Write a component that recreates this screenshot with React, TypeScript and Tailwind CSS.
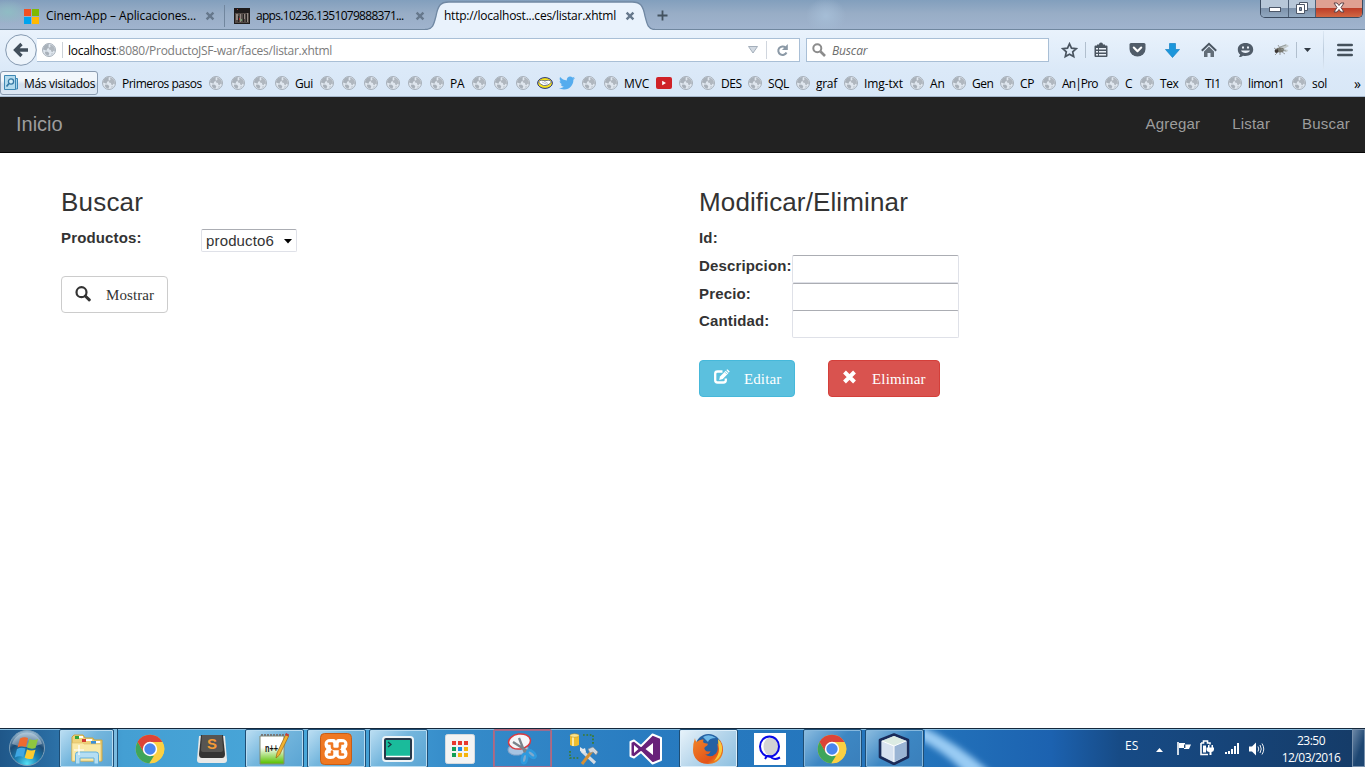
import React from "react";
import { FaTwitter } from "react-icons/fa";

const ui = "font-['Open_Sans','Noto_Sans',sans-serif]";

function Globe() {
  return (
    <svg width="14" height="14" viewBox="0 0 14 14" className="block shrink-0">
      <circle cx="7" cy="7" r="6.5" fill="#dfe6ee" stroke="#a7b0ba" strokeWidth="1" />
      <path d="M1 6.500C1.200 3.500 3.500 1.200 6 1l1.300.8L6.200 3l1 1.300-2 1.500-.8 1.900L2.800 7z" fill="#a9b1ba" />
      <path d="M8 1.800c2 0 4 1.500 4.700 3.400l.2 3-1.500-.4-.8 1.500-1.400-.8-.3-1.600-1.800-.4L6.600 5l1.900-1.200z" fill="#b0b7bf" />
      <path d="m3.400 8.600 2.400.2 1.500 1.400-.9 2.500-2-.7-1.600-2zM9 10.800l2-.6-1.200 1.600z" fill="#a9b1ba" />
    </svg>
  );
}

function Cross() {
  return (
    <svg width="10" height="10" viewBox="0 0 10 10" className="block shrink-0">
      <path d="M1.600 1.600 8.400 8.400M8.400 1.600 1.600 8.400" stroke="#66788c" strokeWidth="2.400" />
    </svg>
  );
}

function Handshake() {
  return (
    <svg width="16" height="12" viewBox="0 0 16 12" className="block">
      <ellipse cx="8" cy="6" rx="7.400" ry="5.400" fill="#f5e11c" stroke="#27347c" />
      <path d="M1.500 4.800 4 3.200l4 .5 4-.5 2.500 1.600L12.500 7l-3 1.500h-3L3.500 7z" fill="#fff" stroke="#27347c" strokeWidth=".6" />
      <path d="m5 5 5 2.500M7 4l4 2.500" stroke="#7b83a8" strokeWidth=".5" />
    </svg>
  );
}

function Youtube() {
  return (
    <svg width="16" height="12" viewBox="0 0 16 12" className="block">
      <rect width="16" height="12" rx="2" fill="#cf2127" />
      <path d="M6.200 3.800v4.400L10 6z" fill="#fff" />
    </svg>
  );
}

type Mark = { w: string; kind?: string; label?: string; t?: string };
const marks: Mark[] = [
  { w: "w-[107px]", label: "Primeros pasos", t: "tracking-[-0.5px]" },
  { w: "w-[22px]" },
  { w: "w-[22px]" },
  { w: "w-[22px]" },
  { w: "w-[45px]", label: "Gui", t: "tracking-[-0.4px]" },
  { w: "w-[22px]" },
  { w: "w-[22px]" },
  { w: "w-[22px]" },
  { w: "w-[22px]" },
  { w: "w-[22px]" },
  { w: "w-[42px]", label: "PA", t: "tracking-[-0.2px]" },
  { w: "w-[22px]" },
  { w: "w-[22px]" },
  { w: "w-[21px]" },
  { w: "w-[22px]", kind: "hand" },
  { w: "w-[23px]", kind: "bird" },
  { w: "w-[22px]" },
  { w: "w-[52px]", label: "MVC", t: "tracking-[-0.1px]" },
  { w: "w-[23px]", kind: "tube" },
  { w: "w-[22px]" },
  { w: "w-[47px]", label: "DES", t: "tracking-[-0.5px]" },
  { w: "w-[48px]", label: "SQL", t: "tracking-[-0.4px]" },
  { w: "w-[48px]", label: "graf", t: "tracking-[-0.3px]" },
  { w: "w-[66px]", label: "Img-txt", t: "tracking-[-0.1px]" },
  { w: "w-[42px]", label: "An", t: "tracking-[-0.2px]" },
  { w: "w-[48px]", label: "Gen", t: "tracking-[-0.5px]" },
  { w: "w-[42px]", label: "CP", t: "tracking-[-0.2px]" },
  { w: "w-[63px]", label: "An|Pro", t: "tracking-[-0.9px]" },
  { w: "w-[35px]", label: "C" },
  { w: "w-[45px]", label: "Tex", t: "tracking-[-0.4px]" },
  { w: "w-[43px]", label: "TI1", t: "tracking-[-0.4px]" },
  { w: "w-[64px]", label: "limon1", t: "tracking-[-0.4px]" },
  { w: "w-[62px]", label: "sol", t: "tracking-[-0.3px]" },
];

function Bookmark({ m }: { m: Mark }) {
  return (
    <div className={`flex shrink-0 items-center gap-[6px] ${m.w}`}>
      {m.kind === "hand" ? <Handshake /> : m.kind === "bird" ? <FaTwitter size={16} color="#55acee" /> : m.kind === "tube" ? <Youtube /> : <Globe />}
      {m.label && <span className={`whitespace-nowrap pt-[2px] ${m.t ?? ""}`}>{m.label}</span>}
    </div>
  );
}

function TabStrip() {
  return (
    <div className="flex h-[30px] shrink-0 items-start bg-[linear-gradient(180deg,#829fbd_0%,#98adc6_45%,#a0b4ce_100%)] text-[12px] text-black shadow-[inset_0_-1px_0_#70879f]">
      <div className="flex h-[29px] w-[224px] items-center bg-[radial-gradient(ellipse_20px_12px_at_8px_12px,#8fbcc4,transparent)] pl-6 pt-[3px]">
        <svg width="15" height="15" viewBox="0 0 15 15" className="block shrink-0">
          <path d="M0 0h7v7H0z" fill="#f25022" />
          <path d="M8 0h7v7H8z" fill="#7fba00" />
          <path d="M0 8h7v7H0z" fill="#00a4ef" />
          <path d="M8 8h7v7H8z" fill="#ffb900" />
        </svg>
        <span className="ml-[7px] w-[159px] whitespace-nowrap tracking-[-0.1px]">Cinem-App – Aplicaciones...</span>
        <Cross />
      </div>
      <div className="mt-[5px] h-[22px] w-px bg-[#71869e]" />
      <div className="flex h-[30px] w-[200px] items-center pl-[9px] pt-[2px]">
        <svg width="16" height="16" viewBox="0 0 16 16" className="block shrink-0">
          <path d="M0 0h16v16H0z" fill="#1e1b1b" />
          <path d="M1 5h14v10H1z" fill="#544b47" />
          <path d="M2 6h2v6H2zM6 6h1v8H6zM10 6h1v5h-1zM13 5h1v9h-1z" fill="#918983" />
          <path d="M4 8h1v6H4zM9 6h1v8H9zM12 6h1v8h-1z" fill="#262222" />
          <path d="M5 10h1v2H5zM3 1h1v1H3z" fill="#b23a34" />
          <path d="M7 11h1v2H7z" fill="#6aa06b" />
        </svg>
        <span className="ml-[6px] w-[159px] whitespace-nowrap tracking-[-0.7px]">apps.10236.1351079888371...</span>
        <Cross />
      </div>
      <div className="grid h-[30px] w-[230px]">
        <svg width="230" height="30" viewBox="0 0 230 30" className="col-start-1 row-start-1 block">
          <path d="M0 30.500V29.500C8 29.500 9 24 11 16C13 6 15 2 24 2H207C216 2 218 6 220 16C222 24 223 29.500 230 29.500V31H0z" fill="#e9f2fc" />
          <path d="M0 29.500C8 29.500 9 24 11 16C13 6 15 2 24 2H207C216 2 218 6 220 16C222 24 223 29.500 230 29.500" fill="none" stroke="#7088a3" strokeWidth="1.300" />
        </svg>
        <div className="col-start-1 row-start-1 flex items-center pl-[19px] pt-[2px]">
          <span className="w-[181px] whitespace-nowrap tracking-[-0.24px]">http://localhost...ces/listar.xhtml</span>
          <Cross />
        </div>
      </div>
      <svg width="11" height="11" viewBox="0 0 11 11" className="ml-[2px] mt-[10px] block">
        <path d="M5.500.5v10M.5 5.500h10" stroke="#43525f" strokeWidth="1.800" />
      </svg>
      <div className="h-[29px] flex-1 bg-[radial-gradient(ellipse_20px_18px_at_158px_16px,#a5bdd6,transparent)]" />
      <div className="flex h-[18px] w-[103px] overflow-hidden rounded-b-[5px] border border-t-0 border-[#3b4b60]">
        <div className="flex w-[28px] items-center justify-center border-r border-[#4d5f75] bg-[linear-gradient(180deg,#b7c7d8_45%,#7d92ab_50%,#91a8c0)]">
          <svg width="12" height="6" className="mt-[3px] block"><rect x=".5" y=".5" width="11" height="4" fill="#fff" stroke="#4c5768" /></svg>
        </div>
        <div className="flex w-[27px] items-center justify-center border-r border-[#4d5f75] bg-[linear-gradient(180deg,#b7c7d8_45%,#7d92ab_50%,#91a8c0)]">
          <svg width="12" height="12" viewBox="0 0 12 12" className="mb-[2px] block">
            <path d="M3.500.5h8v8h-8z" fill="#fff" stroke="#4c5768" />
            <path d="M.5 2.500h8v9h-8z" fill="#fff" stroke="#4c5768" />
            <path d="M3.500 5.500h2v3h-2z" fill="#8296ad" stroke="#4c5768" />
          </svg>
        </div>
        <div className="flex flex-1 items-center justify-center bg-[linear-gradient(180deg,#dfa092_45%,#bd3e29_50%,#d26844)]">
          <svg width="12" height="11" viewBox="0 0 12 11" className="mb-[2px] block">
            <path d="M1 1h3l2 2.500L8 1h3L8 5.500 11 10H8L6 7.500 4 10H1l3-4.500z" fill="#fff" stroke="#5e4247" />
          </svg>
        </div>
      </div>
      <div className="w-[2px]" />
    </div>
  );
}

function ToolIcons() {
  return (
    <div className="flex flex-1 items-center">
      <svg width="17" height="17" viewBox="0 0 17 17" className="ml-[12px] block">
        <path d="m8.500 1.800 2 4.400 4.700.5-3.500 3.200 1 4.700-4.200-2.400-4.200 2.400 1-4.700L1.800 6.700l4.700-.5z" fill="none" stroke="#4a5561" strokeWidth="1.700" />
      </svg>
      <div className="ml-[7px] h-4 w-px bg-[#b1bfce]" />
      <svg width="16" height="16" viewBox="0 0 16 16" className="ml-[7px] block">
        <path d="M4 3.500V2.500h2Q6 .5 8 .5t2 2h2v1h1.500q1 0 1 1V14q0 1-1 1h-11q-1 0-1-1V4.500q0-1 1-1z" fill="#4a5561" />
        <path d="M3 6h2v1.500H3zM6 6h7v1.500H6zM3 9h2v1.500H3zM6 9h7v1.500H6zM3 12h2v1.500H3zM6 12h7v1.500H6z" fill="#e9f0f8" />
      </svg>
      <svg width="17" height="16" viewBox="0 0 17 16" className="ml-[20px] block">
        <path d="M2 1h13q1.500 0 1.500 1.500V7a8 7.500 0 0 1-16 0V2.500Q.5 1 2 1z" fill="#505c69" />
        <path d="m4.800 5.500 3.700 3.700 3.700-3.700" fill="none" stroke="#fff" strokeWidth="2.100" strokeLinecap="round" strokeLinejoin="round" />
      </svg>
      <svg width="15" height="15" viewBox="0 0 15 15" className="ml-[19px] block">
        <path d="M4.500.5h6v6h4L7.500 14.500.5 6.500h4z" fill="#1b96db" stroke="#1481c5" strokeWidth=".7" />
      </svg>
      <svg width="16" height="16" viewBox="0 0 16 16" className="ml-[21px] block">
        <path d="m.8 8.800 7.200-7 7.200 7" fill="none" stroke="#4a5561" strokeWidth="2" />
        <path d="M3 9.500 8 4.500l5 5V15H9.500v-4h-3v4H3z" fill="#626d78" />
      </svg>
      <svg width="17" height="16" viewBox="0 0 17 16" className="ml-[20px] block">
        <path d="M8.500 1C4 1 .8 3.500.8 7.500c0 2.500 1 4 2.400 5L2 15c2 0 3-.5 4-1.300 6 1 10.200-1.700 10.200-6.200C16.200 3.500 13 1 8.500 1z" fill="#505c69" />
        <path d="M5 4.500h2v2H5zM10 4.500h2v2h-2z" fill="#e9f0f8" />
        <path d="M4 8.500h9c-.8 3.300-8.200 3.300-9 0z" fill="#e9f0f8" />
      </svg>
      <svg width="16" height="14" viewBox="0 0 16 14" className="ml-[19px] block">
        <path d="m6 4 7-3 3 2-5 3 4 1-1 2-6-1z" fill="#c4cbcc" />
        <ellipse cx="7" cy="7" rx="4" ry="2.400" fill="#77776f" />
        <circle cx="3.500" cy="8" r="1.900" fill="#3a3532" />
        <path d="M1 5l3 2M2 12l3-3M7 12V9M12 11l-3-2M5 2l2 3" stroke="#777" strokeWidth=".7" />
        <path d="m7 4 6-2M8 6l5 2" stroke="#8d9494" strokeWidth=".8" />
      </svg>
      <div className="ml-[7px] h-4 w-px bg-[#b1bfce]" />
      <svg width="7" height="4" className="ml-[7px] block"><path d="M0 0h7L3.500 4z" fill="#323b45" /></svg>
      <div className="ml-[12px] h-[38px] w-px bg-[linear-gradient(180deg,#dce8f4,#bccbdc,#dce8f4)]" />
      <svg width="16" height="14" viewBox="0 0 16 14" className="ml-[13px] block">
        <path d="M1.300 2h13.400M1.300 7h13.400M1.300 12h13.400" stroke="#45515c" strokeWidth="2.600" strokeLinecap="round" />
      </svg>
    </div>
  );
}

function AddressBar() {
  return (
    <div className="flex h-[40px] shrink-0 items-center text-[12px]">
      <svg width="32" height="32" viewBox="0 0 32 32" className="ml-[5px] block shrink-0">
        <circle cx="16" cy="16" r="15.300" fill="#edf4fb" stroke="#8599b0" />
        <path d="M16.500 10 10.500 16l6 6M11 16h12" fill="none" stroke="#424f5c" strokeWidth="3.300" />
      </svg>
      <div className="flex h-6 w-[763px] items-center border border-l-0 border-[#a9bfd6] bg-white">
        <div className="ml-[5px]"><Globe /></div>
        <div className="ml-[6px] h-4 w-px bg-[#ccd2d8]" />
        <div className="ml-[5px] flex-1 whitespace-nowrap pt-[2px] tracking-[-0.28px] text-[#7b7b7b]">
          <span className="text-black">localhost</span>:8080/ProductoJSF-war/faces/listar.xhtml
        </div>
        <svg width="10" height="8" viewBox="0 0 10 8" className="block"><path d="M.5.5h9L5 7z" fill="#d3dae2" stroke="#a4afbb" /></svg>
        <div className="ml-[8px] h-[18px] w-px bg-[#d0d6de]" />
        <svg width="13" height="13" viewBox="0 0 13 13" className="ml-[9px] mr-[10px] block">
          <path d="M9.500 3.500A4.300 4.300 0 1 0 10.500 8.500" fill="none" stroke="#8b99a6" strokeWidth="2" />
          <path d="M11.800 0v6H6z" fill="#8b99a6" />
        </svg>
      </div>
      <div className="ml-[6px] flex h-6 w-[243px] items-center border border-[#a9bfd6] bg-white">
        <svg width="14" height="14" viewBox="0 0 14 14" className="ml-[5px] block">
          <circle cx="5.300" cy="5.300" r="4" fill="none" stroke="#8c8c8c" strokeWidth="2" />
          <path d="m8.500 8.500 4.500 4.500" stroke="#8c8c8c" strokeWidth="2.600" />
        </svg>
        <span className="ml-[6px] pt-[2px] tracking-[-0.15px] italic text-[#6d6d6d]">Buscar</span>
      </div>
      <ToolIcons />
    </div>
  );
}

function BookmarksBar() {
  return (
    <div className="flex h-[26px] shrink-0 items-center text-[12px] text-black">
      <div className="mr-[4px] flex h-6 w-[98px] shrink-0 items-center rounded-[3px] border border-[#8a9bb0] bg-[linear-gradient(180deg,#f1f6fb_40%,#d4e0ee_55%,#dce7f3)] pl-[3px]">
        <svg width="15" height="16" viewBox="0 0 15 16" className="block shrink-0">
          <path d="M4 3.500h9.500V14H4z" fill="#a5d2ea" stroke="#3d87b3" />
          <path d="M.5.5h11v14H.5z" fill="#b4dbee" stroke="#3d87b3" />
          <circle cx="7" cy="6.500" r="2.600" fill="#d5edf8" stroke="#3579a5" strokeWidth="1.300" />
          <path d="m5 8.500-2.500 3" stroke="#3579a5" strokeWidth="1.700" />
        </svg>
        <span className="ml-[5px] whitespace-nowrap pt-[2px] tracking-[-0.32px]">Más visitados</span>
      </div>
      {marks.map((m, i) => (
        <Bookmark key={i} m={m} />
      ))}
      <span className="text-[14px]">»</span>
    </div>
  );
}

function Field({ label }: { label: string }) {
  return (
    <div className="flex h-[27.500px]">
      <label className="w-[93px] whitespace-nowrap">{label}</label>
      <input className="h-[28px] w-[167px] rounded-[2px] border border-[#dfe1e8] border-t-[#abadb3] bg-white" />
    </div>
  );
}

function Page() {
  return (
    <div className="flex flex-1 flex-col bg-white font-['Liberation_Sans',sans-serif] text-[15px] text-[#333]">
      <nav className="flex h-[56px] items-center border-b border-[#080808] bg-[#222] pl-4 pr-[15px] text-[#9d9d9d]">
        <span className="flex-1 pb-[2px] text-[20px]">Inicio</span>
        <div className="flex gap-[32px] tracking-[0.200px]">
          <span>Agregar</span>
          <span>Listar</span>
          <span>Buscar</span>
        </div>
      </nav>
      <main className="flex pl-[61px] pt-[33px]">
        <section className="w-[638px]">
          <h3 className="text-[26px] leading-8 tracking-[0.200px]">Buscar</h3>
          <div className="mt-[8px] flex">
            <span className="w-[140px] pt-px font-bold leading-[22px] tracking-[0.150px]">Productos:</span>
            <button className="mt-[3px] flex h-[23px] w-[96px] items-center rounded-[2px] border border-[#dfe1e8] border-t-[#abadb3] bg-white pl-[4px] pt-px tracking-[0.150px]">
              producto6
              <svg width="8" height="5" className="ml-[10px] block"><path d="M0 0h8L4 4.500z" fill="#000" /></svg>
            </button>
          </div>
          <button className="mt-[24px] flex h-[37px] w-[107px] items-center rounded-[4px] border border-[#ccc] bg-white pl-[13px] font-['Liberation_Serif',serif]">
            <svg width="16" height="16" viewBox="0 0 16 16" className="mb-[2px] block">
              <circle cx="6.500" cy="6.200" r="5" fill="none" stroke="#333" strokeWidth="2.200" />
              <path d="m10.300 10 4 3.800" stroke="#333" strokeWidth="3" strokeLinecap="round" />
            </svg>
            <span className="ml-[15px] mt-[2px] tracking-[0.100px]">Mostrar</span>
          </button>
        </section>
        <section>
          <h3 className="text-[26px] leading-8 tracking-[0.130px]">Modificar/Eliminar</h3>
          <div className="mt-[8px] font-bold leading-[22px] tracking-[0.150px]">
            <div className="h-[28px] pt-px">Id:</div>
            <div className="mt-px">
              <Field label="Descripcion:" />
              <Field label="Precio:" />
              <Field label="Cantidad:" />
            </div>
          </div>
          <div className="mt-[22.500px] flex gap-[33px] font-['Liberation_Serif',serif] text-white">
            <button className="flex h-[37px] w-[96px] items-center rounded-[4px] border border-[#46b8da] bg-[#5bc0de] pl-[13px]">
              <svg width="17" height="16" viewBox="0 0 17 16" className="mb-[4px] block">
                <path d="M9.500 2.500H4.500Q2.200 2.500 2.200 4.800v6.400q0 2.300 2.300 2.300h6q2.300 0 2.300-2.300V9.500" fill="none" stroke="#fff" strokeWidth="2.300" />
                <path d="m6.200 11 .8-3.600L12.700 1.700l2.600 2.600L9.800 10.100z" fill="#fff" />
                <path d="m13.300 1.100 1.100-.8 2.300 2.300-.9 1.100z" fill="#fff" />
                <path d="m12 3.200 1.800 1.800" stroke="#5bc0de" strokeWidth=".7" />
              </svg>
              <span className="ml-[14px] mt-[2px] tracking-[0.100px]">Editar</span>
            </button>
            <button className="flex h-[37px] w-[112px] items-center rounded-[4px] border border-[#d43f3a] bg-[#d9534f] pl-[13px]">
              <svg width="15" height="14" viewBox="0 0 15 14" className="mb-[4px] block">
                <path d="m2.500 2 10 10M12.500 2l-10 10" stroke="#fff" strokeWidth="4" />
              </svg>
              <span className="ml-[15px] mt-[2px] tracking-[0.150px]">Eliminar</span>
            </button>
          </div>
        </section>
      </main>
    </div>
  );
}

function Chrome() {
  return (
    <svg width="30" height="30" viewBox="0 0 30 30" className="block">
      <circle cx="15" cy="15" r="14.300" fill="#fbd043" />
      <path d="M2.600 7.850 9 18.500 15 22h6L14.400 29.300A14.300 14.300 0 0 1 2.600 7.850z" fill="#3fa55a" />
      <path d="M15 8h12.400A14.300 14.300 0 0 1 14.400 29.300L21 18.500z" fill="#fbd043" />
      <path d="M2.600 7.850A14.300 14.300 0 0 1 27.400 8H15l-6.200 10.500z" fill="#dc4437" />
      <circle cx="15" cy="15" r="7.200" fill="#fff" />
      <circle cx="15" cy="15" r="5.700" fill="#4a86ee" />
    </svg>
  );
}

function Orb() {
  return (
    <svg width="38" height="38" viewBox="0 0 38 38" className="block">
      <defs>
        <radialGradient id="orb" cx=".5" cy=".95" r=".9">
          <stop offset="0" stopColor="#55e2f5" />
          <stop offset=".35" stopColor="#1d82b5" />
          <stop offset=".7" stopColor="#1c4b75" />
          <stop offset="1" stopColor="#8eb1cb" />
        </radialGradient>
      </defs>
      <circle cx="19" cy="19" r="17.500" fill="url(#orb)" stroke="#7d9fb8" />
      <path d="M4 15A15.500 15.500 0 0 1 34 15Q19 21 4 15z" fill="#fff" opacity=".35" />
      <path d="M12 9.500q4-2 8-.5L18 18q-4.500-1.500-8.500.5z" fill="#ee6a30" />
      <path d="M21.500 10q4 2 8.500 0l-2.500 9q-4 1.500-8.500-.5z" fill="#8fc73e" />
      <path d="M9 20q4-2 8.500-.5l-2.200 8.500q-4-1.500-8.500.5z" fill="#3fa7e3" />
      <path d="M19 20.500q4 2 8.500.3L25 29.500q-4 1.500-8.300-.7z" fill="#fdcb2e" />
    </svg>
  );
}

function Explorer() {
  return (
    <svg width="34" height="32" viewBox="0 0 34 32" className="block">
      <path d="M2 4 4 2h9l2 3h8l1 2h8v21H2z" fill="#efd27a" stroke="#c9a443" />
      <path d="M5 3h4v3H5z" fill="#32a33b" />
      <path d="M9 3h4v2H9z" fill="#fff" />
      <path d="M12 6h4v3h-4z" fill="#d33b31" />
      <path d="M16 6h6v2h-6z" fill="#fff" />
      <path d="M21 8h5v3h-5z" fill="#3b8fd8" />
      <path d="M26 8h4v2h-4z" fill="#fff" />
      <path d="M2 10h11l1 1h17v17H2z" fill="#fae9a7" stroke="#dfc26b" strokeWidth=".7" />
      <path d="M5.500 31V21.500q0-2.500 2.500-2.500h18q2.500 0 2.500 2.500V31H24v-6H10v6z" fill="#b4def3" stroke="#65b1da" />
      <path d="M9 12v10M4 17h10" stroke="#fff" strokeWidth="1.200" />
    </svg>
  );
}

function Sublime() {
  return (
    <svg width="32" height="30" viewBox="0 0 32 30" className="block">
      <path d="M3 2h26l2 24q0 3-3 3H4q-3 0-3-3z" fill="#e9e9e7" />
      <path d="M5 1h22l2 19q0 4-3 4H6q-3 0-3-4z" fill="#353433" />
      <path d="M6 1h20l1 15q0 2-2 2H7q-2 0-2-2z" fill="#575552" />
      <text x="16" y="15" textAnchor="middle" fontFamily="Liberation Sans" fontWeight="bold" fontSize="15" fill="#f49a36">S</text>
    </svg>
  );
}

function Notepad() {
  return (
    <svg width="30" height="32" viewBox="0 0 30 32" className="block">
      <defs>
        <linearGradient id="np" x1="0" y1="0" x2="0" y2="1">
          <stop offset=".4" stopColor="#fff" />
          <stop offset=".95" stopColor="#62c40e" />
        </linearGradient>
      </defs>
      <path d="M1 3h24v28H1z" fill="url(#np)" stroke="#828a77" />
      <path d="M2 2h23" stroke="#777" strokeWidth="2" strokeDasharray="2 1" />
      <text x="6" y="19" fontFamily="Liberation Sans" fontWeight="bold" fontSize="10" textLength="13" lengthAdjust="spacingAndGlyphs" fill="#111">n++</text>
      <path d="m17 25 1-5L27 1l3 1.500L20.500 22z" fill="#f1b331" stroke="#9a6614" strokeWidth=".7" />
      <path d="m26 2 1-2 3 1.500-1 2z" fill="#c33c3c" />
    </svg>
  );
}

function Xampp() {
  return (
    <svg width="32" height="32" viewBox="0 0 32 32" className="block">
      <rect x=".5" y=".5" width="31" height="31" rx="4" fill="#ef7822" stroke="#c65d17" />
      <path d="M10.500 6h3q2.500 0 2.500 2.500Q16 6 18.500 6h3q6 0 6 5.500 0 2.800-2 4.500 2 1.700 2 4.500 0 5.500-6 5.500-3.500 0-5.500-2.500Q14 26 10.500 26q-6 0-6-5.500 0-2.800 2-4.500-2-1.700-2-4.500Q4.500 6 10.500 6z" fill="#fff" />
      <path d="M9 10.500h3v3q0 2.500 2.500 2.500h3q2.500 0 2.500-2.500v-3h3M9 21.500h3v-3M20 18v3.500h3" fill="none" stroke="#ef7822" strokeWidth="2.600" strokeLinecap="round" strokeLinejoin="round" />
    </svg>
  );
}

function Terminal() {
  return (
    <svg width="32" height="26" viewBox="0 0 32 26" className="block">
      <rect x="1" y="1" width="30" height="24" rx="3" fill="#26384a" stroke="#eef4f7" strokeWidth="2" />
      <path d="M4 4h24v17H4z" fill="#1abb9b" />
      <path d="m6 6 3 2.500L6 11" fill="none" stroke="#173c46" strokeWidth="1.300" />
      <path d="M4 20.500h24" stroke="#fff" strokeWidth="1.500" />
    </svg>
  );
}

function Launcher() {
  return (
    <svg width="30" height="30" viewBox="0 0 30 30" className="block">
      <rect x=".5" y=".5" width="29" height="29" rx="2" fill="#f3f3f3" stroke="#d5dade" />
      <path d="M7 7h4v4H7zM13 7h4v4h-4zM19 7h4v4h-4z" fill="#e8392e" />
      <path d="M7 13h4v4H7zM7 19h4v4H7z" fill="#129e57" />
      <path d="M13 13h4v4h-4z" fill="#1e8be6" />
      <path d="M19 13h4v4h-4zM13 19h4v4h-4zM19 19h4v4h-4z" fill="#f5b40c" />
    </svg>
  );
}

function Snip() {
  return (
    <svg width="32" height="32" viewBox="0 0 32 32" className="block">
      <ellipse cx="12" cy="16" rx="10" ry="6" fill="#a8c4e2" stroke="#87a5c9" transform="rotate(-8 12 16)" />
      <ellipse cx="13.500" cy="8.500" rx="11" ry="7.500" fill="#f5f5f8" stroke="#d93a40" strokeWidth="1.500" transform="rotate(-8 13.500 8.500)" />
      <path d="m13 5 6 15M7 9l14 9" stroke="#7b828a" strokeWidth="2.300" />
      <ellipse cx="18.500" cy="25.500" rx="2.500" ry="4.800" fill="#7fa9cc" stroke="#2f9ade" strokeWidth="2.600" transform="rotate(12 18.500 25.500)" />
      <ellipse cx="25.500" cy="21" rx="2.500" ry="4.800" fill="#7fa9cc" stroke="#2f9ade" strokeWidth="2.600" transform="rotate(-50 25.500 21)" />
    </svg>
  );
}

function DbTools() {
  return (
    <svg width="32" height="32" viewBox="0 0 32 32" className="block">
      <path d="M2 2v10q4 2.500 9 0V2z" fill="#eebd2f" />
      <path d="M4 3v10h2V3z" fill="#fbe9a4" />
      <ellipse cx="6.500" cy="2.500" rx="4.500" ry="1.800" fill="#fbe38c" stroke="#b98a18" strokeWidth=".5" />
      <path d="M15 2h10v10M2 18v7h10" fill="none" stroke="#3f7b27" strokeWidth="1.700" strokeDasharray="1.700 1.700" />
      <path d="m14 18 13 12" stroke="#d5dbe1" strokeWidth="3.200" />
      <path d="m12 14 3 2 2-1 1 4-3 1-3-2z" fill="#e5e9ed" />
      <path d="M24 18 14 31" stroke="#d69035" strokeWidth="3" />
      <path d="m20 16 5-2 5 5-2 3-3-3-3 1z" fill="#d1d7dc" stroke="#7d878f" strokeWidth=".6" />
    </svg>
  );
}

function VisualStudio() {
  return (
    <svg width="34" height="32" viewBox="0 0 34 32" className="block">
      <path d="M1.500 9 5 7.500l7 5.500L23.500 1.500 32 5v22l-8.500 3.500L12 19l-7 5.500L1.500 23z" fill="#68217a" stroke="#fff" strokeWidth="2" strokeLinejoin="round" />
      <path d="m5 12 4.500 4L5 20zM24 10v12l-7.500-6z" fill="#fff" />
    </svg>
  );
}

function Firefox() {
  return (
    <svg width="32" height="32" viewBox="0 0 32 32" className="block">
      <defs>
        <linearGradient id="fx" x1="0" y1="0" x2="1" y2="1">
          <stop offset="0" stopColor="#f0852a" />
          <stop offset=".7" stopColor="#e35319" />
          <stop offset="1" stopColor="#f9c12d" />
        </linearGradient>
      </defs>
      <circle cx="16.500" cy="14" r="13" fill="#2561a3" />
      <path d="M11 4q6-4 13 1-7 0-8 4z" fill="#6db8e8" />
      <path d="M3 5q0 2.500 1.500 4 3-3 7-2.500-1 2.500.5 3.500l4 .7q0 2-3 3.300-1.500 1 0 3 2 2.500 5.500 1-1 4-5.500 3.500 6 4 11-1 3-4 1-10 2 1 3 4Q29 8 27 6q4 4 4 11c0 8-6 14-15 14S1 25 1 17q0-7 2-12z" fill="url(#fx)" />
      <path d="M26 6q5 5 4 12-2 8-8 10 5-6 5-12-1-6-1-10z" fill="#fbc93a" />
    </svg>
  );
}

function QIcon() {
  return (
    <div className="flex h-8 w-8 items-center justify-center bg-white">
      <svg width="32" height="32" viewBox="0 0 32 32" className="block">
        <ellipse cx="17.500" cy="13.500" rx="8" ry="9.500" fill="#d3d3d3" />
        <ellipse cx="15.500" cy="13.500" rx="9.500" ry="10" fill="none" stroke="#0808e8" strokeWidth="2" />
        <path d="m11 26 2-3q3-.5 5 2 3 2 8-.5" fill="none" stroke="#0808e8" strokeWidth="2" />
      </svg>
    </div>
  );
}

function NetBeans() {
  return (
    <svg width="32" height="32" viewBox="0 0 32 32" className="block">
      <path d="M16 1.500 30 7v17l-14 7L2 24V7z" fill="#c3d5e6" stroke="#1a2b59" strokeWidth="2.600" strokeLinejoin="round" />
      <path d="m16 3 12 5-12 5L4 8z" fill="#dcebe3" />
      <path d="M16 13 28 8v15l-12 6z" fill="#9ab4d4" />
      <path d="M16 13 4 8v15l12 6z" fill="#d7e2f0" />
      <path d="M16 13v16M4 8l12 5 12-5" fill="none" stroke="#fff" />
    </svg>
  );
}

const open = "border border-[#1e4d74] bg-[linear-gradient(135deg,#bddff3_0%,#74b6dd_45%,#5aa4d3_100%)] shadow-[inset_0_0_0_1px_#b8dcf1]";
const dim = "border border-[#1e4d74] bg-[linear-gradient(135deg,#8dbde0_0%,#3d87c3_50%,#3a7fbb_100%)] shadow-[inset_0_0_0_1px_#86b8dd]";
const active = "border border-[#1e4d74] bg-[linear-gradient(135deg,#e8f3fa_0%,#b5d5eb_50%,#8cbfe0_100%)] shadow-[inset_0_0_0_1px_#dceefa]";

const apps: { el: React.ReactNode; c: string }[] = [
  { el: <Chrome />, c: "" },
  { el: <Sublime />, c: "" },
  { el: <Notepad />, c: open },
  { el: <Xampp />, c: open },
  { el: <Terminal />, c: open },
  { el: <Launcher />, c: "" },
  { el: <Snip />, c: "border border-[#b3687d] shadow-[inset_0_0_0_1px_#9b6d91]" },
  { el: <DbTools />, c: "" },
  { el: <VisualStudio />, c: "" },
  { el: <Firefox />, c: active },
  { el: <QIcon />, c: "" },
  { el: <Chrome />, c: dim },
  { el: <NetBeans />, c: dim },
];

function Tray() {
  return (
    <div className="flex items-center text-white">
      <span className="mb-[5px] w-[31px] text-[12px]">ES</span>
      <svg width="7" height="4" className="mt-[3px] block"><path d="M0 4h7L3.500 0z" fill="#fff" /></svg>
      <svg width="16" height="15" viewBox="0 0 16 15" className="ml-[13px] mt-px block">
        <path d="M2 1v13" stroke="#fff" strokeWidth="1.600" />
        <path d="M3 2h6v1.500h6L13 8H8V7H3z" fill="#fff" />
        <path d="M8.700 3.500v3.500" stroke="#264c76" strokeWidth="1.400" />
      </svg>
      <svg width="15" height="16" viewBox="0 0 15 16" className="ml-[8px] block">
        <path d="M1 3h2.500V1h4v2H10v1.500M8 14.500H1V3" fill="none" stroke="#fff" strokeWidth="1.600" />
        <path d="M3 5.500h3v7H3z" fill="#fff" />
        <path d="M6.500 7.500h7.500v2q0 2-2.500 2.500v3h-2v-3q-3-.5-3-2.500zM8 5h1.500v3H8zM11.500 5H13v3h-1.500z" fill="#fff" />
      </svg>
      <svg width="15" height="12" viewBox="0 0 15 12" className="ml-[10px] mt-[2px] block">
        <path d="M0 9h2v2H0zM3 8h2v3H3zM6 6h2v5H6zM9 3h2v8H9zM12 0h2v11h-2z" fill="#fff" />
      </svg>
      <svg width="16" height="14" viewBox="0 0 16 14" className="ml-[9px] mt-[2px] block">
        <path d="M0 4.500h3L7 .5v13l-4-4H0z" fill="#fff" />
        <path d="M9 4.500q1.500 2.500 0 5M11 3q2.500 4 0 8M13 1.500q3.500 5.500 0 11" fill="none" stroke="#fff" strokeWidth=".9" />
      </svg>
      <div className="ml-[9px] mt-px flex w-[74px] flex-col items-center text-[12px] leading-[17px] tracking-[-0.500px]">
        <span>23:50</span>
        <span>12/03/2016</span>
      </div>
      <div className="ml-[4px] h-[38px] w-[13px] border border-[#7790ac] bg-[linear-gradient(110deg,#6b87a6,#1d4672_60%)]" />
    </div>
  );
}

function Taskbar() {
  return (
    <div className="flex h-[39px] shrink-0 border-t border-[#15283b] bg-[linear-gradient(90deg,#1f5789_0%,#2b6fa5_4%,#449fd3_9%,#4aa8da_25%,#368cca_33%,#287bc0_48%,#2373bb_68%,#1c62b0_77%,#174b86_82%,#153b67_100%)] shadow-[inset_0_1px_0_#87bde0]">
      <div className="flex w-[59px] items-center pl-2"><Orb /></div>
      <div className={`flex h-[39px] w-[55px] items-center justify-center rounded-[2px] ${open}`}><Explorer /></div>
      <div className="mr-px h-[39px] w-[4px] border-r border-[#1e4d74] bg-[#7bbbe0]" />
      {apps.map((a, i) => (
        <div key={i} className="flex w-[62px] justify-center">
          <div className={`flex h-[39px] w-[59px] items-center justify-center rounded-[2px] ${a.c}`}>{a.el}</div>
        </div>
      ))}
      <svg width="200" height="38" viewBox="0 0 200 38" className="block">
        <defs>
          <filter id="soft" x="-20%" y="-20%" width="140%" height="140%"><feGaussianBlur stdDeviation="3" /></filter>
        </defs>
        <path d="M-10-6Q34 14 68 46L42 46Q20 22-10 8z" fill="#9accf4" filter="url(#soft)" />
      </svg>
      <Tray />
    </div>
  );
}

export default function App() {
  return (
    <div className={`flex h-[767px] w-[1365px] flex-col overflow-hidden ${ui}`}>
      <TabStrip />
      <div className="flex h-[67px] shrink-0 flex-col border-b border-[#a6b8cc] bg-[linear-gradient(180deg,#e9f2fc_0%,#dbe9f8_60%,#d8e7f7_100%)]">
        <AddressBar />
        <BookmarksBar />
      </div>
      <Page />
      <Taskbar />
    </div>
  );
}
